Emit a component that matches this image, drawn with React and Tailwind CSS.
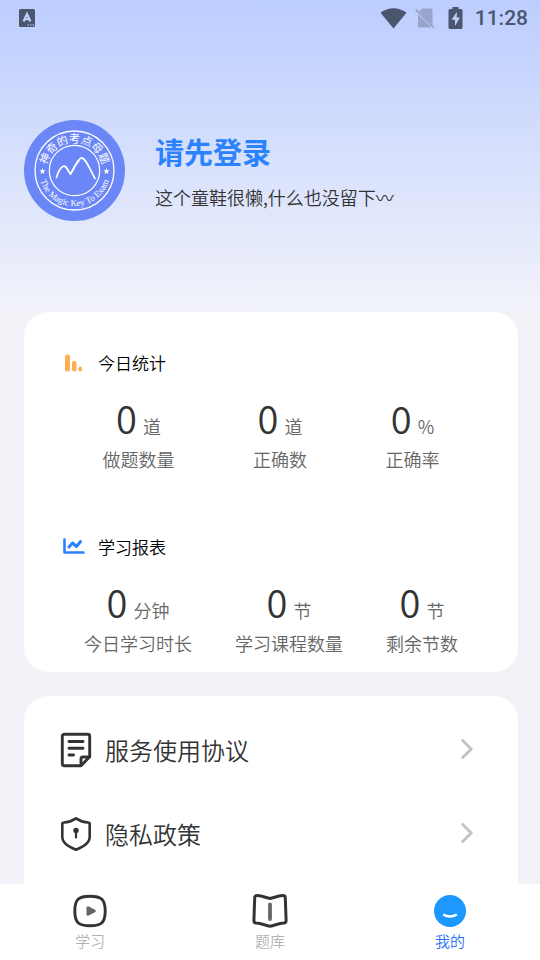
import clsx from 'clsx';

const today = [
  { value: 0, unit: '道', label: '做题数量' },
  { value: 0, unit: '道', label: '正确数' },
  { value: 0, unit: '%', label: '正确率' },
];

const report = [
  { value: 0, unit: '分钟', label: '今日学习时长' },
  { value: 0, unit: '节', label: '学习课程数量' },
  { value: 0, unit: '节', label: '剩余节数' },
];

function StatusBar() {
  return (
    <div className="flex h-9 items-center justify-between pl-[19px] pr-3 text-[#4b556d]">
      <svg className="h-[18px] w-4" viewBox="0 0 16 18">
        <rect width="16" height="18" rx="1.5" fill="currentColor" />
        <path d="M4.500 12.500 8 5l3.500 7.500M5.800 10.300h4.400" fill="none" stroke="#c3d1ff" strokeWidth="2.100" />
        <path d="M8.500 16H10M11 16h1.500M13.500 16H15" stroke="#c3d1ff" strokeWidth="1.200" />
      </svg>
      <div className="flex items-center">
        <svg className="h-[21px] w-[27px]" viewBox="0 0 27 21">
          <path d="M.5 4.800C8-1.200 19-1.200 26.500 4.800L13.500 20.500Z" fill="currentColor" />
        </svg>
        <svg className="ml-2 h-[21px] w-5" viewBox="0 0 20 21">
          <path d="M7.500.5H16a1.500 1.500 0 0 1 1.500 1.500v14.500L4 3.500ZM3 6.500 16.500 19.500H4.500A1.500 1.500 0 0 1 3 18Z" fill="#98a4c9" />
          <path d="m.8 1.500 18 18" stroke="#98a4c9" strokeWidth="2" />
        </svg>
        <svg className="ml-[13px] h-[22px] w-[15px]" viewBox="0 0 15 22">
          <path d="M4.500 0h6v2H13a1.500 1.500 0 0 1 1.500 1.500v17A1.500 1.500 0 0 1 13 22H2A1.500 1.500 0 0 1 .5 20.500v-17A1.500 1.500 0 0 1 2 2h2.500Z" fill="currentColor" />
          <path d="M8.800 5 3.500 12.800H7V19l5-8.500H8.800Z" fill="#bfceff" />
        </svg>
        <span className="ml-3 font-['Roboto',sans-serif] text-[21px] font-medium leading-6">11:28</span>
      </div>
    </div>
  );
}

function Logo() {
  return (
    <svg className="size-[101px] shrink-0" viewBox="0 0 101 101" role="img" aria-label="The Magic Key To Exam">
      <defs>
        <path id="arc-top" d="M22.500 50.500a28 28 0 0 1 56 0" />
        <path id="arc-bottom" d="M14.800 50.500a35.700 35.700 0 0 0 71.400 0" />
      </defs>
      <circle cx="50.500" cy="50.500" r="50.500" fill="#6b86f7" />
      <circle cx="50.500" cy="50.500" r="39.500" fill="none" stroke="#fff" strokeWidth="1.300" />
      <circle cx="50.500" cy="50.500" r="25.200" fill="none" stroke="#fff" strokeWidth="1.200" />
      <g fill="#fff" textAnchor="middle">
        <text className="font-['Noto_Sans_CJK_SC',sans-serif] text-[11px] font-normal">
          <textPath href="#arc-top" startOffset="50%">神奇的考点母题</textPath>
        </text>
        <text className="font-['Liberation_Serif',serif] text-[9px] font-normal">
          <textPath href="#arc-bottom" startOffset="50%">The Magic Key To Exam</textPath>
        </text>
      </g>
      <path d="m18.500 48 .8 2.200h2.300l-1.800 1.500.7 2.300-2-1.300-2 1.300.7-2.300-1.800-1.500h2.300ZM82.500 48l.8 2.200h2.300l-1.800 1.500.7 2.300-2-1.300-2 1.300.7-2.300-1.800-1.500h2.300Z" fill="#fff" />
      <path d="M32.500 57.500C34 52 37 47 39.500 46.200c3-.9 4 4.500 7 7.800C50 48 53.500 39.500 57 38c4.500-1 9 12 14 20.500" fill="none" stroke="#fff" strokeWidth="1.700" strokeLinecap="round" strokeLinejoin="round" />
      <path d="M41.500 46.500c1.500 1.500 2.500 4.500 5 7.500 3-4 5-10 8.500-13" fill="none" stroke="#fff" strokeWidth="1.500" strokeLinecap="round" />
    </svg>
  );
}

function StatSection({ icon, title, items, rowClass }) {
  return (
    <section className="h-[184px]">
      <h2 className="flex items-center gap-3 pl-[38px] text-[17px] leading-6 text-black">
        {icon}
        {title}
      </h2>
      <div className={clsx('mt-[17px] flex justify-evenly', rowClass)}>
        {items.map((item) => (
          <div key={item.label} className="text-center text-lg leading-6 text-[#666]">
            <p className="mb-[3px] h-[52px] leading-[52px]">
              <span className="mr-[6px] text-[38px] text-[#333]">{item.value}</span>
              {item.unit}
            </p>
            <p>{item.label}</p>
          </div>
        ))}
      </div>
    </section>
  );
}

function BarsIcon() {
  return (
    <svg className="size-6" viewBox="0 0 24 24" fill="#ffae50">
      <rect x="3" y="3.500" width="5" height="17" rx="2" />
      <rect x="10" y="10" width="4.500" height="10.500" rx="2" />
      <rect x="16.500" y="15.500" width="3.500" height="5" rx="1.700" />
    </svg>
  );
}

function TrendIcon() {
  return (
    <svg className="size-6" viewBox="0 0 24 24" fill="none" stroke="#2b82ff" strokeWidth="2.600" strokeLinecap="round" strokeLinejoin="round">
      <path d="M2.500 4.500v13h19" />
      <path d="m7 12 3.500-4 4 3.500L18.500 6.500" strokeWidth="3" />
    </svg>
  );
}

function NoteIcon() {
  return (
    <svg className="h-9 w-8" viewBox="0 0 32 36" fill="none" stroke="#333" strokeWidth="2.900" strokeLinecap="round" strokeLinejoin="round">
      <path d="M4.300 2.300h23.400a2 2 0 0 1 2 2v20.500L21 33.700H4.300a2 2 0 0 1-2-2V4.300a2 2 0 0 1 2-2Z" />
      <path d="M21 33v-6a2 2 0 0 1 2-2h6.500M9 9.500h14M9 16.200h14M9 23h4.500" />
    </svg>
  );
}

function ShieldIcon() {
  return (
    <svg className="h-9 w-8" viewBox="0 0 32 36" fill="none" stroke="#333" strokeWidth="2.600" strokeLinecap="round" strokeLinejoin="round">
      <path d="M16 2.300c4 2.700 8.500 4 12.200 4.200.9 0 1.500.6 1.500 1.500v12.500c0 6.500-5.500 9.700-13.700 13.200C7.800 30.200 2.300 27 2.300 20.500V8c0-.9.6-1.500 1.500-1.500C7.500 6.300 12 5 16 2.300Z" />
      <path d="M16 16v5.500" strokeWidth="2.200" />
      <circle cx="16" cy="14.500" r="2.700" fill="#333" stroke="none" />
    </svg>
  );
}

function MenuRow({ icon, label }) {
  return (
    <button type="button" className="flex h-[84px] w-full items-center pl-9 pr-[45px] text-left text-2xl font-[350] text-[#333]">
      {icon}
      <span className="ml-[13px] flex-1">{label}</span>
      <svg className="h-[22px] w-3" viewBox="0 0 12 22" fill="none" stroke="#c3c3c3" strokeWidth="2.900" strokeLinecap="round" strokeLinejoin="round">
        <path d="m1.700 1.500 8.500 8.500-8.500 8.500" />
      </svg>
    </button>
  );
}

function PlayIcon() {
  return (
    <svg className="size-9" viewBox="0 0 36 36">
      <path d="M18 3.200c11.500 0 15.200 3.300 15.200 14.800S29.500 32.800 18 32.800 2.800 29.500 2.800 18 6.500 3.200 18 3.200Z" fill="none" stroke="#333" strokeWidth="2.900" />
      <path d="M16 14.800 22.300 18 16 21.200Z" fill="#666" stroke="#666" strokeWidth="3" strokeLinejoin="round" />
    </svg>
  );
}

function BookIcon() {
  return (
    <svg className="size-9" viewBox="0 0 36 36" fill="none" strokeLinecap="round" strokeLinejoin="round">
      <path d="M18 5.500C14 4.800 9.500 2.300 5 2.600c-1.500 0-2.300.9-2.300 2.400L1.900 27.500c0 1.700.7 2.500 2.300 2.600 5 .2 9 2.300 13.800 3.100 4.800-.8 8.800-2.900 13.800-3.100 1.600-.1 2.300-.9 2.300-2.600L33.300 5c0-1.500-.8-2.400-2.300-2.400-4.500-.3-9 2.200-13 2.900Z" stroke="#333" strokeWidth="3" />
      <path d="M18 11.500v14.500" stroke="#666" strokeWidth="3.800" />
    </svg>
  );
}

function FaceIcon() {
  return (
    <svg className="size-9" viewBox="0 0 36 36">
      <circle cx="18" cy="18" r="16" fill="#1c98ff" />
      <path d="M11.200 21.500q6.800 4 13.600 0" fill="none" stroke="#fff" strokeWidth="2.600" />
    </svg>
  );
}

const tabs = [
  { label: '学习', icon: <PlayIcon /> },
  { label: '题库', icon: <BookIcon /> },
  { label: '我的', icon: <FaceIcon />, active: true },
];

export default function App() {
  return (
    <div className="flex h-screen flex-col bg-[#f2f3f9] font-['Noto_Sans_CJK_SC',sans-serif] font-[350]">
      <main className="min-h-0 flex-1 overflow-hidden">
        <header className="h-[312px] bg-linear-to-b from-[#bccdff] to-[#f2f3f9]">
          <StatusBar />
          <div className="mt-[84px] flex items-center gap-[30px] px-6">
            <Logo />
            <div>
              <h1 className="text-[29px] font-bold leading-9 text-[#2b82ff]">
                <a href="#login">请先登录</a>
              </h1>
              <p className="mt-4 text-lg leading-6 text-[#333]">这个童鞋很懒,什么也没留下〰</p>
            </div>
          </div>
        </header>

        <div className="ml-6 mr-[22px] h-[360px] rounded-[24px] bg-white pt-[39px]">
          <StatSection icon={<BarsIcon />} title="今日统计" items={today} />
          <StatSection icon={<TrendIcon />} title="学习报表" items={report} rowClass="px-[17px]" />
        </div>

        <div className="ml-6 mr-[22px] mt-6 rounded-[24px] bg-white pb-10 pt-3">
          <MenuRow icon={<NoteIcon />} label="服务使用协议" />
          <MenuRow icon={<ShieldIcon />} label="隐私政策" />
        </div>
      </main>

      <nav className="grid h-[76px] grid-cols-3 bg-white">
        {tabs.map((tab) => (
          <button
            key={tab.label}
            type="button"
            className={clsx(
              'flex flex-col items-center gap-0.5 pt-[9px] text-[15px] font-[350] leading-5',
              tab.active ? 'text-[#2b72f5]' : 'text-[#b3b3b3]'
            )}
          >
            {tab.icon}
            {tab.label}
          </button>
        ))}
      </nav>
    </div>
  );
}
